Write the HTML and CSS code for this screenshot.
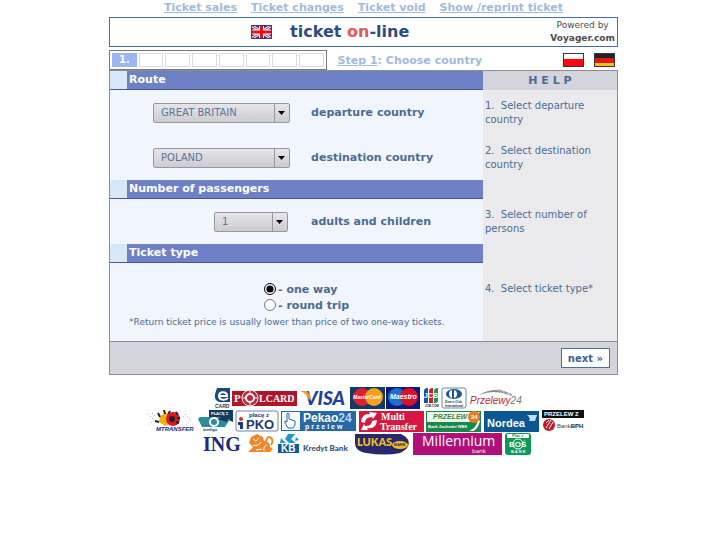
FILE: index.html
```html
<!DOCTYPE html>
<html lang="en">
<head>
    <meta charset="UTF-8">
    <meta name="viewport" content="width=device-width, initial-scale=1.0">
    <title>ticket on-line</title>
    <link rel="stylesheet" href="styles.css">
</head>
<body>
<div class="page">
    <nav class="topnav">
        <a href="#">Ticket sales</a>
        <a href="#">Ticket changes</a>
        <a href="#">Ticket void</a>
        <a href="#">Show /reprint ticket</a>
    </nav>

    <header class="banner">
        <div class="brand">
            <svg class="flag" width="21" height="14" viewBox="0 0 21 14">
                <rect width="21" height="14" fill="#2430a8"/>
                <path d="M0 0L21 14M21 0L0 14" stroke="#fff" stroke-width="3"/>
                <path d="M0 0L21 14M21 0L0 14" stroke="#e01020" stroke-width="1"/>
                <path d="M10.5 0V14M0 7H21" stroke="#fff" stroke-width="5"/>
                <path d="M10.5 0V14M0 7H21" stroke="#f00a14" stroke-width="3"/>
                <rect x=".5" y=".5" width="20" height="13" fill="none" stroke="#4a3a50"/>
            </svg>
            <h1>ticket <span>on</span>-line</h1>
        </div>
        <p class="powered">Powered by<br><b>Voyager.com</b></p>
    </header>

    <div class="steps">
        <ol class="progress">
            <li class="current">1.</li>
            <li></li><li></li><li></li><li></li><li></li><li></li><li></li>
        </ol>
        <p class="step-name"><u>Step 1</u>: Choose country</p>
        <a class="lang" href="#" aria-label="Polski">
            <svg class="flag" width="21" height="14" viewBox="0 0 21 14">
                <rect width="21" height="14" fill="#fff"/>
                <rect y="6" width="21" height="8" fill="#fb0a10"/>
                <rect x=".5" y=".5" width="20" height="13" fill="none" stroke="#4a2a38"/>
            </svg>
        </a>
        <a class="lang" href="#" aria-label="Deutsch">
            <svg class="flag" width="21" height="14" viewBox="0 0 21 14">
                <rect width="21" height="5" fill="#222"/>
                <rect y="5" width="21" height="5" fill="#e01818"/>
                <rect y="10" width="21" height="4" fill="#f2c010"/>
                <rect x=".5" y=".5" width="20" height="13" fill="none" stroke="#44303c"/>
            </svg>
        </a>
    </div>

    <form class="panel">
        <div class="row">
            <h2>Route</h2>
            <div class="help help-title">H E L P</div>
        </div>
        <div class="row">
            <div class="field">
                <select id="from"><option>GREAT BRITAIN</option></select>
                <label for="from">departure country</label>
            </div>
            <p class="help">1.&nbsp; Select departure country</p>
        </div>
        <div class="row">
            <div class="field">
                <select id="to"><option>POLAND</option></select>
                <label for="to">destination country</label>
            </div>
            <p class="help">2.&nbsp; Select destination country</p>
        </div>
        <div class="row">
            <h2>Number of passengers</h2>
            <div class="help"></div>
        </div>
        <div class="row">
            <div class="field">
                <select id="persons" class="short"><option>1</option></select>
                <label for="persons">adults and children</label>
            </div>
            <p class="help">3.&nbsp; Select number of persons</p>
        </div>
        <div class="row">
            <h2>Ticket type</h2>
            <div class="help"></div>
        </div>
        <div class="row">
            <div class="type">
                <label><input type="radio" name="type" checked>- one way</label>
                <label><input type="radio" name="type">- round trip</label>
                <p class="note">*Return ticket price is usually lower than price of two one-way tickets.</p>
            </div>
            <p class="help help-type">4.&nbsp; Select ticket type*</p>
        </div>
        <div class="actions">
            <button type="button">next »</button>
        </div>
    </form>

    <div class="logos">
        <div class="logo-row cards">
            <!-- eCard -->
            <svg width="18" height="22" viewBox="0 0 18 22">
                <path d="M4 1H17V15H10C4 16 1 12 2 7Z" fill="#1c4a78"/>
                <path d="M6 9H14C14 4 6 4 6 9C6 13 11 14 15 11" fill="none" stroke="#fff" stroke-width="2"/>
                <text class="sans" x="2" y="21" font-size="5" font-weight="bold" fill="#1c3a60">CARD</text>
            </svg>
            <!-- Polcard -->
            <svg width="66" height="22" viewBox="0 0 66 22">
                <rect y="4" width="65" height="15" fill="#b01428"/>
                <circle cx="18" cy="11" r="8" fill="#c02438" stroke="#fff"/>
                <circle cx="18" cy="11" r="4" fill="none" stroke="#fff" stroke-width="2"/>
                <path d="M18 4V7M18 15V18M11 11H14M22 11H25" stroke="#fff"/>
                <text class="serif" x="2" y="15" font-size="11" font-weight="bold" fill="#fff">P</text>
                <text class="serif" x="27" y="15" font-size="10" font-weight="bold" fill="#fff">LCARD</text>
            </svg>
            <!-- Visa -->
            <svg width="50" height="22" viewBox="0 0 50 22">
                <text class="lato" x="6" y="18" font-size="19" font-weight="900" font-style="italic" fill="#20409a">VISA</text>
                <path d="M1 4H8L12 10L10 13C8 8 6 6 1 4Z" fill="#f0a020"/>
            </svg>
            <!-- MasterCard -->
            <svg width="35" height="22" viewBox="0 0 35 22">
                <rect width="35" height="22" fill="#123a66"/>
                <circle cx="12" cy="10" r="9" fill="#dc2030"/>
                <circle cx="24" cy="10" r="9" fill="#f5a020"/>
                <text class="sans" x="3" y="12" font-size="5" font-weight="bold" font-style="italic" fill="#fff">MasterCard</text>
            </svg>
            <!-- Maestro -->
            <svg width="36" height="22" viewBox="0 0 36 22">
                <rect width="34" height="22" fill="#101880"/>
                <circle cx="11" cy="10" r="9" fill="#1a70cc"/>
                <circle cx="23" cy="10" r="9" fill="#dc1028"/>
                <text class="sans" x="4" y="12" font-size="7" font-weight="bold" font-style="italic" fill="#fff">Maestro</text>
            </svg>
            <!-- JCB -->
            <svg width="17" height="22" viewBox="0 0 17 22">
                <path d="M1 4Q1 1 5 1V16H1Z" fill="#2050a0"/>
                <path d="M6 4Q6 1 10 1V16H6Z" fill="#d81830"/>
                <path d="M11 4Q11 1 15 1V14Q15 16 11 16Z" fill="#189848"/>
                <text class="sans" x="1" y="11" font-size="7" font-weight="bold" fill="#fff">JCB</text>
                <text class="sans" x="2" y="20" font-size="3" font-weight="bold" fill="#222">JCB.COM</text>
            </svg>
            <!-- Diners Club -->
            <svg width="27" height="22" viewBox="0 0 27 22">
                <rect x="1" y="1" width="24" height="20" rx="2" fill="#fff" stroke="#6888a8"/>
                <ellipse cx="13" cy="7" rx="8" ry="5" fill="#1c5898"/>
                <circle cx="12" cy="7" r="4" fill="#fff"/>
                <path d="M12 3V11" stroke="#1c5898" stroke-width="2"/>
                <text class="sans" x="4" y="16" font-size="3" font-weight="bold" fill="#234">Diners Club</text>
                <text class="sans" x="4" y="20" font-size="3" font-weight="bold" fill="#234">International</text>
            </svg>
            <!-- Przelewy24 -->
            <svg width="54" height="22" viewBox="0 0 54 22">
                <path d="M10 8Q23 0 38 5L40 8Q25 2 10 8Z" fill="#888"/>
                <path d="M29 3L43 8" stroke="#aaa" stroke-width="2" stroke-dasharray="3 1"/>
                <text class="sans" x="1" y="17" font-size="10" font-style="italic" fill="#b8283c">Przelewy<tspan fill="#777">24</tspan></text>
            </svg>
        </div>
        <div class="logo-row">
            <!-- mTransfer -->
            <svg width="48" height="22" viewBox="0 0 48 22">
                <path d="M1 4L7 10L1 16M38 4L44 10L38 16M5 3L9 7M36 7L40 3" fill="none" stroke="#aaa" stroke-dasharray="1 2"/>
                <path d="M13 7Q19 0 25 6L28 12L18 16L12 12Z" fill="#f4b010"/>
                <path d="M13 7L11 3M18 4L17 0M12 12L8 11M21 5L23 1" stroke="#222" stroke-width="2"/>
                <circle cx="26" cy="9" r="7" fill="#dc1828"/>
                <circle cx="25" cy="9" r="3" fill="#222"/>
                <path d="M29 2L31 5M33 8H30M32 13L29 12" stroke="#222" stroke-width="2"/>
                <text class="sans" x="9" y="21" font-size="6" font-weight="bold" font-style="italic" fill="#282878">MTRANSFER</text>
            </svg>
            <!-- Inteligo -->
            <svg width="38" height="22" viewBox="0 0 38 22">
                <path d="M13 0H37V12L28 8L13 7Z" fill="#143a64"/>
                <path d="M4 7H16L18 9H34L29 17H6L2 9Z" fill="#2b8c9c"/>
                <circle cx="18" cy="12" r="4" fill="#2b8c9c" stroke="#fff" stroke-width="2"/>
                <path d="M21 9L34 3L31 12" fill="#143a64"/>
                <text class="sans" x="15" y="5" font-size="4" font-weight="bold" fill="#fff">PŁACĘ Z</text>
                <text class="sans" x="7" y="21" font-size="4" font-weight="bold" fill="#143a64">inteligo</text>
            </svg>
            <!-- PKO -->
            <svg width="45" height="22" viewBox="0 0 45 22">
                <rect x="1" y="1" width="42" height="20" rx="2" fill="#fff" stroke="#6b83ad"/>
                <text class="sans" x="14" y="7" font-size="6" font-weight="bold" fill="#233c72">płacę z</text>
                <text class="sans" x="11" y="19" font-size="13" font-weight="bold" fill="#1c3878">PKO</text>
                <circle cx="6" cy="9" r="2" fill="#e02838"/>
                <path d="M3 12H8V19H5V15H3Z" fill="#1c3878"/>
            </svg>
            <!-- Pekao24 -->
            <svg width="76" height="22" viewBox="0 0 76 22">
                <rect y="1" width="75" height="20" fill="#2468a8"/>
                <rect x="1" y="2" width="18" height="18" fill="#f4f8fc"/>
                <path d="M6 12V4Q7 2 8 4V9L14 11V15L12 18H7L4 13V11Z" fill="#fff" stroke="#2468a8"/>
                <text class="sans" x="22" y="12" font-size="12" font-weight="bold" fill="#fff">Pekao<tspan fill="#b4d8f8">24</tspan></text>
                <text class="sans" x="24" y="19" font-size="7" font-weight="bold" fill="#fff">p r z e l e w</text>
            </svg>
            <!-- Multi Transfer -->
            <svg width="67" height="22" viewBox="0 0 67 22">
                <rect x="1" y="1" width="65" height="21" fill="#d41840"/>
                <path d="M3 12Q4 3 12 4L11 2L19 3L15 9L14 7Q7 7 7 13ZM19 10Q18 20 9 18L10 20L3 20L6 14L7 16Q14 16 14 11Z" fill="#fff"/>
                <text class="serif" x="23" y="10" font-size="10" font-weight="bold" fill="#fff">Multi</text>
                <text class="serif" x="22" y="20" font-size="10" font-weight="bold" fill="#fff">Transfer</text>
            </svg>
            <!-- Bank Zachodni WBK -->
            <svg width="57" height="22" viewBox="0 0 57 22">
                <rect y="1" width="55" height="21" fill="#16884c"/>
                <path d="M1 2H54L48 12H1Z" fill="#edf6ec"/>
                <path d="M43 21Q51 18 52 9L54 11Q52 19 47 21Z" fill="#fff"/>
                <text class="sans" x="7" y="9" font-size="7" font-weight="bold" font-style="italic" fill="#38883c">PRZELEW</text>
                <circle cx="48" cy="7" r="6" fill="#f07820"/>
                <text class="sans" x="45" y="9" font-size="6" font-weight="bold" fill="#fff">24</text>
                <text class="sans" x="2" y="18" font-size="4" font-weight="bold" fill="#fff">Bank Zachodni WBK</text>
            </svg>
            <!-- Nordea -->
            <svg width="57" height="22" viewBox="0 0 57 22">
                <rect y="1" width="55" height="21" fill="#0a5794"/>
                <text class="sans" x="3" y="17" font-size="11" font-weight="bold" fill="#fff">Nordea</text>
                <path d="M43 5H53L51 11H45Q47 8 43 5Z" fill="#bfe0f4"/>
            </svg>
            <!-- Bank BPH -->
            <svg width="43" height="22" viewBox="0 0 43 22">
                <rect width="42" height="8" fill="#111"/>
                <text class="sans" x="2" y="6" font-size="6" font-weight="bold" fill="#fff">PRZELEW Z</text>
                <circle cx="7" cy="15" r="6" fill="#c41824"/>
                <path d="M4 18L9 10M7 19L11 12M4 13L7 10" stroke="#fff"/>
                <text class="sans" x="15" y="18" font-size="6" fill="#444">Bank<tspan font-weight="bold" fill="#222">BPH</tspan></text>
            </svg>
        </div>
        <div class="logo-row">
            <!-- ING -->
            <svg width="75" height="22" viewBox="0 0 75 22">
                <text class="serif" x="2" y="18" font-size="20" font-weight="bold" fill="#202878">ING</text>
                <path d="M48 18L52 14L48 10L50 4L56 1L62 4L63 8Q69 8 69 14L72 16L69 19H47Z" fill="#f08828"/>
                <path d="M65 9Q66 2 70 5Q73 8 70 12" fill="none" stroke="#f08828" stroke-width="2"/>
                <path d="M52 6L55 8L58 5M52 12Q57 14 60 9M55 17L61 16M63 18Q62 13 66 12" fill="none" stroke="#fff"/>
            </svg>
            <!-- Kredyt Bank -->
            <svg width="76" height="22" viewBox="0 0 76 22">
                <path d="M11 1H18L14 6L19 10H12L8 6ZM4 5L9 10H3ZM19 4L22 7L18 8Z" fill="#1c98cc"/>
                <rect x="1" y="11" width="21" height="9" fill="#105898"/>
                <text class="sans" x="4" y="19" font-size="10" font-weight="bold" fill="#fff">KB</text>
                <text class="lato" x="26" y="18" font-size="8" font-weight="900" fill="#365478">Kredyt Bank</text>
            </svg>
            <!-- Lukas Bank -->
            <svg width="58" height="22" viewBox="0 0 58 22">
                <path d="M1 1H47C58 6 57 15 46 20Q32 23 12 20Q1 18 1 10Z" fill="#28286c"/>
                <text class="lato" x="3" y="13" font-size="11" font-weight="900" fill="#f8c020">LUKAS</text>
                <ellipse cx="46" cy="12" rx="8" ry="4" fill="#f8b818"/>
                <text class="sans" x="40" y="13" font-size="4" font-weight="bold" fill="#28286c">BANK</text>
            </svg>
            <!-- Millennium -->
            <svg width="91" height="22" viewBox="0 0 91 22">
                <rect width="89" height="22" fill="#b01078"/>
                <text class="open" x="9" y="13" font-size="14" fill="#fff">Millennium</text>
                <text class="open" x="59" y="20" font-size="6" fill="#fff">bank</text>
            </svg>
            <!-- BOS -->
            <svg width="26" height="22" viewBox="0 0 26 22">
                <rect width="26" height="22" rx="3" fill="#109858"/>
                <rect x="2" y="1" width="22" height="4" rx="1" fill="#fff"/>
                <text class="sans" x="7" y="4" font-size="4" font-weight="bold" fill="#109858">Płać z</text>
                <circle cx="13" cy="11" r="5" fill="none" stroke="#fff"/>
                <text class="sans" x="4" y="14" font-size="8" font-weight="bold" fill="#fff">BOŚ</text>
                <text class="sans" x="6" y="20" font-size="4" font-weight="bold" fill="#fff">B A N K</text>
            </svg>
        </div>
    </div>
</div>
</body>
</html>
```
FILE: styles.css
```css
* {
    box-sizing: border-box;
}
body {
    margin: 0;
    background-color: #fff;
    color: #4b6c93;
    font-family: "DejaVu Sans", Verdana, sans-serif;
    font-size: 11px;
}
h1, h2, p, ol {
    margin: 0;
    padding: 0;
}
.page {
    width: 70%;
    margin: 0 auto;
}
.topnav {
    display: flex;
    justify-content: center;
    gap: 14px;
    height: 17px;
    line-height: 16px;
    font-weight: bold;
}
.topnav a {
    color: #9fbbda;
}
.flag {
    display: block;
}

.banner {
    display: flex;
    align-items: center;
    min-height: 30px;
    padding-right: 2px;
    border: 1px solid #4c6c9c;
}
.brand {
    flex: 1;
    display: flex;
    align-items: center;
    justify-content: center;
    gap: 18px;
}
.brand h1 {
    font-size: 16px;
    line-height: 24px;
    color: #2b4e7c;
}
.brand h1 span {
    color: #e05a60;
}
.powered {
    text-align: center;
    font-size: 9px;
    line-height: 13px;
    color: #4c4c4c;
}

.steps {
    display: flex;
    align-items: center;
    padding: 3px 3px 0 0;
}
.progress {
    display: grid;
    grid-template-columns: repeat(8, 1fr);
    gap: 2px;
    width: 43%;
    height: 20px;
    padding: 2px;
    border: 1px solid #77777c;
    list-style: none;
}
.progress li {
    border: 1px solid #dcdcdf;
    text-align: center;
    font-weight: bold;
    font-size: 10px;
    line-height: 12px;
    color: #fff;
}
.progress .current {
    border-color: #9db6f2;
    background-color: #9db6f2;
}
.step-name {
    flex: 1;
    padding-left: 11px;
    font-weight: bold;
    color: #9fbbda;
}
.lang {
    margin-left: 10px;
}

.panel {
    border: 1px solid #8e8e92;
    background-color: #f1f5fd;
}
.row {
    display: grid;
    grid-template-columns: 1fr 134px;
}
.row h2 {
    padding-left: 19px;
    border-bottom: 1px solid #4c5590;
    background: linear-gradient(to right, #d8e7f8 17px, #6e80c6 17px);
    font-size: 11px;
    line-height: 18px;
    color: #fff;
}
.help {
    display: flex;
    align-items: center;
    padding: 0 20px 0 2px;
    background-color: #eaeaec;
    font-size: 10px;
    line-height: 14px;
}
.help-title {
    justify-content: center;
    padding: 0;
    background-color: #d3d4dc;
    font-size: 11px;
    font-weight: bold;
}
.field {
    display: grid;
    grid-template-columns: 180px 1fr;
    gap: 21px;
    align-items: center;
    min-height: 45px;
    font-weight: bold;
}
select {
    appearance: none;
    justify-self: end;
    width: 137px;
    height: 20px;
    padding: 0 20px 0 7px;
    border: 1px solid #98989c;
    border-radius: 2px;
    background: url("data:image/svg+xml,%3Csvg xmlns='http://www.w3.org/2000/svg' width='15' height='18'%3E%3Cpath d='M.5 0V18' stroke='%2398989c'/%3E%3Cpath d='M4 7H11L7.500 11Z'/%3E%3C/svg%3E") right center no-repeat, linear-gradient(#e6e6ea, #ccccd0);
    font-family: inherit;
    font-size: 10px;
    color: #587698;
}
select.short {
    width: 74px;
    margin-right: 2px;
}
.type {
    display: flex;
    flex-direction: column;
    padding: 18px 0 10px 19px;
    font-weight: bold;
}
.type label {
    display: flex;
    align-items: center;
    gap: 2px;
    height: 16px;
    margin-left: 135px;
}
.type input {
    width: 12px;
    height: 12px;
    margin: 0;
    accent-color: #000;
}
.note {
    font-size: 9px;
    font-weight: normal;
    line-height: 18px;
}
.help-type {
    align-items: flex-start;
    padding-top: 19px;
}
.actions {
    display: flex;
    justify-content: flex-end;
    padding: 6px 7px;
    border-top: 1px solid #8e8e92;
    background-color: #d3d4dc;
}
.actions button {
    height: 20px;
    padding: 0 6px;
    border: 1px solid #4c7098;
    background-color: #fff;
    font-family: inherit;
    font-size: 10px;
    font-weight: bold;
    color: #3c5f8c;
}

.logos {
    padding: 12px 0 12px 6px;
}
.logo-row {
    display: flex;
    justify-content: center;
    gap: 1px;
    height: 23px;
}
.cards {
    padding-left: 4px;
}
.logos svg {
    flex: none;
}
.logos .sans {
    font-family: "Liberation Sans", Arial, sans-serif;
}
.logos .serif {
    font-family: "Liberation Serif", "Times New Roman", serif;
}
.logos .lato {
    font-family: Lato, sans-serif;
}
.logos .open {
    font-family: "Open Sans", sans-serif;
}
```
